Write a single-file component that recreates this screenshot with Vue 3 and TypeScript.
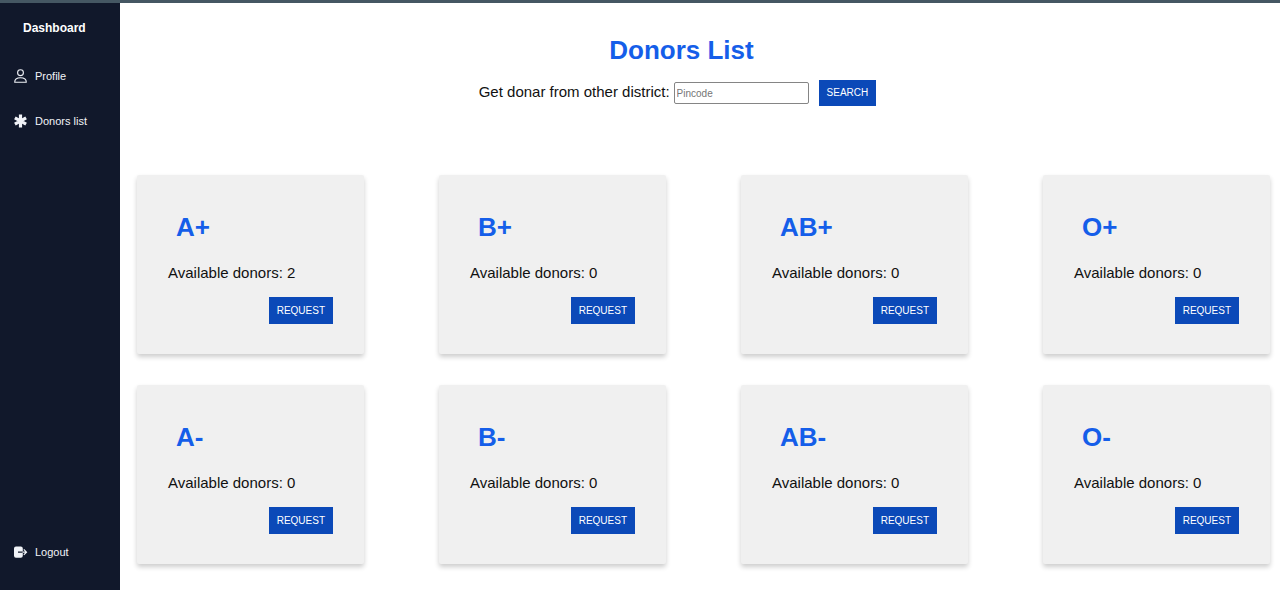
<script setup lang="ts">
import { ref } from 'vue'

interface BloodGroup {
  name: string
  donors: number
}

const pincode = ref<string>('')

const groups: BloodGroup[] = [
  { name: 'A+', donors: 2 },
  { name: 'B+', donors: 0 },
  { name: 'AB+', donors: 0 },
  { name: 'O+', donors: 0 },
  { name: 'A-', donors: 0 },
  { name: 'B-', donors: 0 },
  { name: 'AB-', donors: 0 },
  { name: 'O-', donors: 0 },
]
</script>

<template>
  <div class="page">
    <div class="topbar"></div>
    <div class="layout">
      <nav class="sidebar">
        <h2 class="brand">Dashboard</h2>
        <a class="link" href="#profile">
          <svg class="icon" viewBox="0 0 14 14" fill="none" stroke="currentColor" stroke-width="1.1">
            <circle cx="6.500" cy="3.700" r="2.900" />
            <path d="M.7 13.200C.7 10.400 2.900 8.800 6.500 8.800s5.800 1.600 5.800 4.400z" stroke-linejoin="round" />
          </svg>
          <span>Profile</span>
        </a>
        <a class="link" href="#donors">
          <svg class="icon" viewBox="0 0 14 14" stroke="currentColor" stroke-width="3.200">
            <path d="M6.500.6v12.800M.9 3.800l11.200 6.400M12.100 3.800L.9 10.200" />
          </svg>
          <span>Donors list</span>
        </a>
        <a class="link logout" href="#logout">
          <svg class="icon" viewBox="0 0 14 14">
            <path
              fill="currentColor"
              d="M2 1.500h4.800a2 2 0 0 1 2 2v3H4v1.300h4.800v3a2 2 0 0 1-2 2H2a2 2 0 0 1-2-2v-7.300a2 2 0 0 1 2-2z"
            />
            <path
              d="M8.500 7.150h4M9.800 4.400l2.700 2.750-2.700 2.750"
              fill="none"
              stroke="currentColor"
              stroke-width="1.2"
            />
          </svg>
          <span>Logout</span>
        </a>
      </nav>
      <main class="main">
        <header class="head">
          <h1 class="title">Donors List</h1>
          <form class="search" @submit.prevent>
            <label class="label" for="pincode">Get donar from other district:</label>
            <input id="pincode" v-model="pincode" class="field" type="text" placeholder="Pincode" />
            <button class="btn" type="submit">SEARCH</button>
          </form>
        </header>
        <section class="grid">
          <article v-for="group in groups" :key="group.name" class="card">
            <h2 class="group">{{ group.name }}</h2>
            <p class="count">Available donors: {{ group.donors }}</p>
            <button class="btn" type="button">REQUEST</button>
          </article>
        </section>
      </main>
    </div>
  </div>
</template>

<style>
body {
  margin: 0;
  background: #fff;
}
</style>

<style scoped>
.page {
  display: flex;
  flex-direction: column;
  min-height: 100vh;
  color: #111;
  font-family: "Liberation Sans", Arial, sans-serif;
  font-size: 15px;
  line-height: 18px;
}

.topbar {
  height: 3px;
  background: #455763;
}

.layout {
  display: flex;
  flex: 1;
}

.sidebar {
  box-sizing: border-box;
  display: flex;
  flex-direction: column;
  flex: 0 0 120px;
  padding: 16px 14px 29px;
  background: #11182b;
  color: #fff;
}

.brand {
  margin: 0 0 30px;
  padding-left: 9px;
  font-size: 12px;
  line-height: 18px;
}

.link {
  display: flex;
  align-items: center;
  gap: 7px;
  margin-bottom: 27px;
  color: #f1f3f8;
  font-size: 11px;
  line-height: 18px;
  text-decoration: none;
}

.logout {
  margin-top: auto;
  margin-bottom: 0;
}

.icon {
  flex: none;
  width: 14px;
  height: 14px;
}

.main {
  flex: 1;
  min-width: 0;
  padding: 31px 10px 26px 17px;
}

.head {
  display: flex;
  flex-direction: column;
  align-items: center;
  margin: 0 52px 69px 0;
}

.title {
  margin: 0 0 14px;
  padding-left: 8px;
  color: #155ee9;
  font-size: 26px;
  line-height: 32px;
}

.search {
  display: flex;
  align-items: center;
}

.label {
  padding-bottom: 2px;
}

.field {
  box-sizing: border-box;
  width: 135px;
  height: 22px;
  margin: 0 10px 0 4px;
  padding: 1px 2px;
  border: 1px solid #858585;
  border-radius: 2px;
  background: #fff;
  color: #111;
  font-family: inherit;
  font-size: 10px;
}

.field::placeholder {
  color: #757575;
}

.btn {
  padding: 0 8px;
  border: 0;
  background: #0b49b8;
  color: #fff;
  font-family: inherit;
  font-size: 10px;
  line-height: 26px;
}

.grid {
  display: grid;
  grid-template-columns: repeat(4, 227px);
  justify-content: space-between;
  row-gap: 31px;
}

.card {
  box-sizing: border-box;
  display: flex;
  flex-direction: column;
  align-items: flex-start;
  padding: 36px 31px 30px;
  border-radius: 2px;
  background: #f0f0f0;
  box-shadow: 0 3px 5px rgba(0, 0, 0, 0.2);
}

.group {
  margin: 0 0 21px;
  padding-left: 8px;
  color: #155ee9;
  font-size: 26px;
  line-height: 32px;
}

.count {
  margin: 0 0 15px;
}

.card .btn {
  align-self: flex-end;
  line-height: 27px;
}
</style>
